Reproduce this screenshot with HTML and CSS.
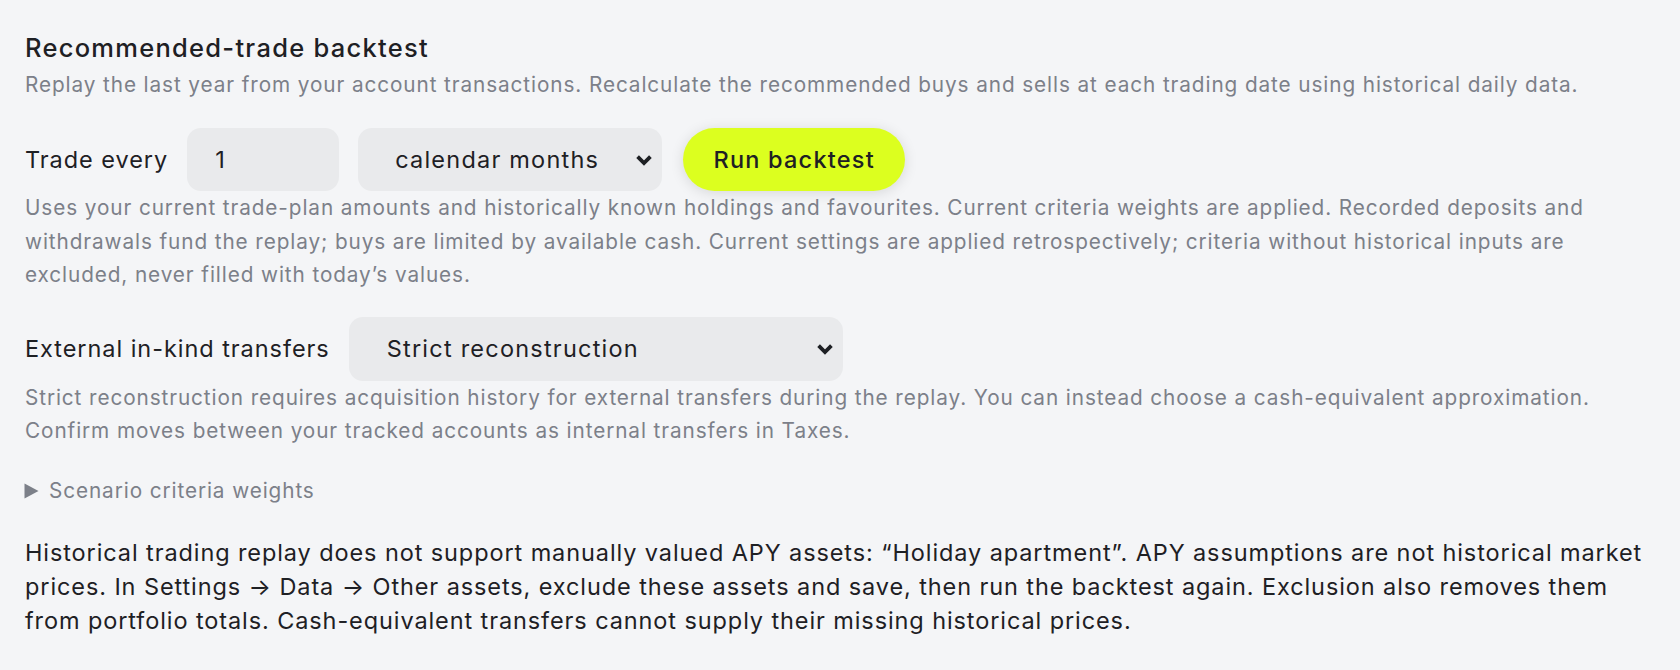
FILE: index.html
```html
<!DOCTYPE html>
<html lang="en">
<head>
<meta charset="utf-8">
<title>Recommended-trade backtest</title>
<link rel="stylesheet" href="styles.css">
</head>
<body>
<section class="panel">
  <h2 class="title">Recommended-trade backtest</h2>
  <p class="sub">Replay the last year from your account transactions. Recalculate the recommended buys and sells at each trading date using historical daily data.</p>

  <div class="row row-trade">
    <label class="label" for="every">Trade every</label>
    <input class="field num" id="every" type="text" value="1">
    <div class="select-wrap sel-unit">
      <select class="field select">
        <option>calendar months</option>
      </select>
      <svg class="chev" viewBox="0 0 18 12" width="18" height="12"><path d="M2.6 2.6 L9 9 L15.4 2.6" fill="none" stroke="#1e2024" stroke-width="3.8" stroke-linejoin="miter"/></svg>
    </div>
    <button class="run" type="button">Run backtest</button>
  </div>
  <p class="help">Uses your current trade-plan amounts and historically known holdings and favourites. Current criteria weights are applied. Recorded deposits and withdrawals fund the replay; buys are limited by available cash. Current settings are applied retrospectively; criteria without historical inputs are<br>excluded, never filled with today’s values.</p>

  <div class="row row-transfer">
    <label class="label" for="transfers">External in-kind transfers</label>
    <div class="select-wrap sel-transfer">
      <select class="field select" id="transfers">
        <option>Strict reconstruction</option>
      </select>
      <svg class="chev" viewBox="0 0 18 12" width="18" height="12"><path d="M2.6 2.6 L9 9 L15.4 2.6" fill="none" stroke="#1e2024" stroke-width="3.8" stroke-linejoin="miter"/></svg>
    </div>
  </div>
  <p class="help">Strict reconstruction requires acquisition history for external transfers during the replay. You can instead choose a cash-equivalent approximation. Confirm moves between your tracked accounts as internal transfers in Taxes.</p>

  <details class="weights">
    <summary><svg class="tri" viewBox="0 0 15 16" width="15" height="16"><path d="M0.5 0.5 L14.5 8 L0.5 15.5 Z" fill="#7c8089"/></svg><span>Scenario criteria weights</span></summary>
  </details>

  <p class="warn">Historical trading replay does not support manually valued APY assets: “Holiday apartment”. APY assumptions are not historical market prices. In Settings → Data → Other assets, exclude these assets and save, then run the backtest again. Exclusion also removes them from portfolio totals. Cash-equivalent transfers cannot supply their missing historical prices.</p>
</section>
</body>
</html>
```

FILE: styles.css
```css
html, body {
  margin: 0;
  padding: 0;
  background: #f4f5f7;
}
body {
  font-family: Inter, "Noto Sans", "Liberation Sans", sans-serif;
  color: #1e2024;
  letter-spacing: 0.9px;
}
.panel {
  padding: 32px 24px 20px 25px;
}
.title {
  margin: 0;
  font-size: 25.5px;
  line-height: 32px;
  font-weight: 500;
  letter-spacing: 1.27px;
  color: #1e2024;
}
.sub {
  margin: 5px 0 0;
  font-size: 20.75px;
  line-height: 32px;
  color: #7c8089;
}
.row {
  display: flex;
  align-items: center;
}
.row-trade {
  margin-top: 27px;
  gap: 19px;
}
.row-transfer {
  margin-top: 25px;
  gap: 19px;
}
.label {
  font-size: 23.5px;
  letter-spacing: 0.95px;
  color: #1e2024;
}
.field {
  font-family: inherit;
  font-size: 23.5px;
  letter-spacing: 1.22px;
  color: #1e2024;
  background: #e9eaec;
  border: none;
  border-radius: 14px;
  height: 63px;
  box-sizing: border-box;
  outline: none;
}
.num {
  width: 152px;
  padding: 0 0 0 28px;
}
.select-wrap {
  position: relative;
}
.select {
  appearance: none;
  -webkit-appearance: none;
  width: 100%;
  padding: 0 40px 0 37px;
}
.sel-unit {
  width: 304px;
}
.sel-transfer {
  width: 494px;
}
.sel-transfer .select {
  height: 64px;
  padding-left: 38px;
}
.chev {
  position: absolute;
  right: 9px;
  top: 50%;
  margin-top: -6px;
  pointer-events: none;
}
.run {
  margin-left: 2px;
  font-family: inherit;
  font-size: 23.5px;
  letter-spacing: 1.22px;
  font-weight: 500;
  color: #1e2024;
  background: #dcff1f;
  border: none;
  border-radius: 999px;
  width: 222px;
  height: 63px;
  box-shadow: 0 2px 14px rgba(0, 0, 0, 0.12);
}
.help {
  margin: 0;
  font-size: 20.75px;
  line-height: 33.6px;
  color: #7c8089;
}
.weights {
  margin-top: 26px;
  font-size: 20.75px;
  line-height: 33.6px;
  color: #7c8089;
}
.weights summary {
  list-style: none;
  display: flex;
  align-items: center;
  gap: 10px;
}
.weights summary::-webkit-details-marker {
  display: none;
}
.tri {
  flex: none;
  margin-left: -1px;
}
.warn {
  margin: 28px 0 0;
  font-size: 23.5px;
  line-height: 34.3px;
  color: #1e2024;
}
```
